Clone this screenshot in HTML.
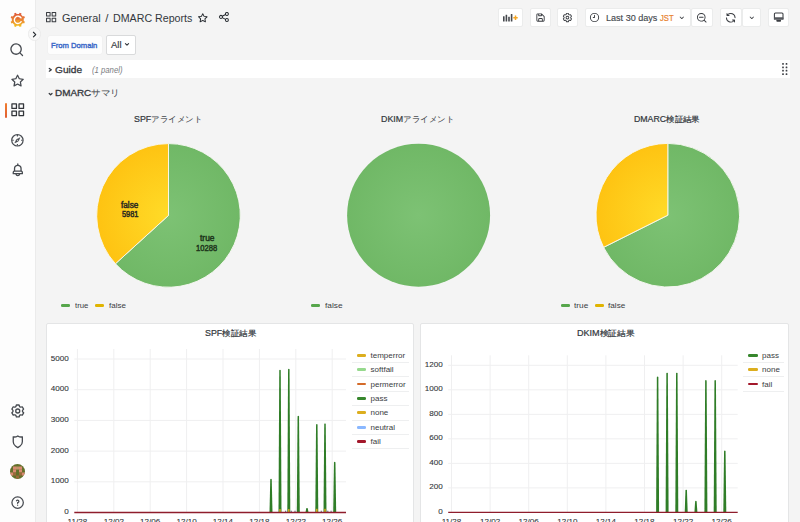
<!DOCTYPE html>
<html><head><meta charset="utf-8">
<style>
*{box-sizing:border-box;margin:0;padding:0}
html,body{width:800px;height:522px;overflow:hidden;background:#f4f4f4;font-family:"Liberation Sans",sans-serif;color:#24292e}
.abs{position:absolute}
#side{position:absolute;left:0;top:0;width:35.5px;height:522px;background:#fdfdfd;border-right:1px solid #ebebeb}
.ic{position:absolute;overflow:visible}
.btn{position:absolute;top:7.6px;height:19.7px;background:#fff;border:1px solid #ebecec;border-radius:2px}
.t{position:absolute;white-space:nowrap}
.panel{position:absolute;background:#fff;border:1px solid #e4e5e6;border-radius:2px}
</style></head><body>
<div id="side"><svg class="ic" style="left:9.8px;top:11.9px" width="15.6" height="15.6" viewBox="0 0 30 30">
<defs><linearGradient id="lg" x1="0" y1="1" x2="0" y2="0"><stop offset="0" stop-color="#f3c51f"/><stop offset=".4" stop-color="#ec8f31"/><stop offset="1" stop-color="#de553c"/></linearGradient></defs>
<path fill="url(#lg)" d="M14.70 3.40 L17.31 3.63 L18.56 1.25 L22.21 2.76 L21.40 5.33 L23.41 7.01 L22.98 6.59 L24.67 8.60 L27.24 7.79 L28.75 11.44 L26.37 12.69 L26.60 15.30 L26.60 14.70 L26.37 17.31 L28.75 18.56 L27.24 22.21 L24.67 21.40 L22.99 23.41 L23.41 22.98 L21.40 24.67 L22.21 27.24 L18.56 28.75 L17.31 26.37 L14.70 26.60 L15.30 26.60 L12.69 26.37 L11.44 28.75 L7.79 27.24 L8.60 24.67 L6.59 22.99 L7.02 23.41 L5.33 21.40 L2.76 22.21 L1.25 18.56 L3.63 17.31 L3.40 14.70 L3.40 15.30 L3.63 12.69 L1.25 11.44 L2.76 7.79 L5.33 8.60 L7.01 6.59 L6.59 7.02 L8.60 5.33 L7.79 2.76 L11.44 1.25 L12.69 3.63 L15.30 3.40Z"/>
<path d="M21.4 18.6A7 7 0 1 1 21.2 11.2" fill="none" stroke="#fff" stroke-width="2.6" stroke-linecap="round"/>
<circle cx="15" cy="15" r="3.2" fill="url(#lg)"/>
</svg><svg class="ic" style="left:9.46px;top:42.46px" width="15.48" height="15.48" viewBox="0 0 24 24"><path fill="#464a50" d="M21.71,20.29,18,16.61A9,9,0,1,0,16.61,18l3.68,3.68a1,1,0,0,0,1.42,0A1,1,0,0,0,21.71,20.29ZM11,18a7,7,0,1,1,7-7A7,7,0,0,1,11,18Z"/></svg><svg class="ic" style="left:9.94px;top:72.64px" width="15.12" height="15.12" viewBox="0 0 24 24"><path fill="#464a50" d="M22,9.67A1,1,0,0,0,21.14,9l-5.69-.83L12.9,3a1,1,0,0,0-1.8,0L8.55,8.16,2.86,9a1,1,0,0,0-.81.68,1,1,0,0,0,.25,1l4.13,4-1,5.68A1,1,0,0,0,6.9,21.44L12,18.77l5.1,2.67a.93.93,0,0,0,.46.12,1,1,0,0,0,.59-.19,1,1,0,0,0,.4-1l-1-5.68,4.13-4A1,1,0,0,0,22,9.67Zm-6.15,4a1,1,0,0,0-.29.88l.72,4.2-3.76-2a1.06,1.06,0,0,0-.94,0l-3.76,2,.72-4.2a1,1,0,0,0-.29-.88l-3-3,4.21-.61a1,1,0,0,0,.76-.55L12,5.7l1.88,3.82a1,1,0,0,0,.76.55l4.21.61Z"/></svg><div class="abs" style="left:4.8px;top:102.9px;width:2.4px;height:14.7px;background:linear-gradient(#f07d2e,#e05f33);border-radius:1px"></div><svg class="ic" style="left:9.86px;top:102.46px" width="15.48" height="15.48" viewBox="0 0 24 24"><path fill="#33363b" d="M10,13H3a1,1,0,0,0-1,1v7a1,1,0,0,0,1,1h7a1,1,0,0,0,1-1V14A1,1,0,0,0,10,13ZM9,20H4V15H9ZM21,2H14a1,1,0,0,0-1,1v7a1,1,0,0,0,1,1h7a1,1,0,0,0,1-1V3A1,1,0,0,0,21,2ZM20,9H15V4h5Zm1,4H14a1,1,0,0,0-1,1v7a1,1,0,0,0,1,1h7a1,1,0,0,0,1-1V14A1,1,0,0,0,21,13Zm-1,7H15V15h5ZM10,2H3A1,1,0,0,0,2,3v7a1,1,0,0,0,1,1h7a1,1,0,0,0,1-1V3A1,1,0,0,0,10,2ZM9,9H4V4H9Z"/></svg><svg class="ic" style="left:0;top:0" width="1" height="1" viewBox="0 0 1 1"><circle cx="17.4" cy="140.3" r="5.7" fill="none" stroke="#464a50" stroke-width="1.2"/><path d="M17.4 135.10000000000002v1.5M17.4 145.5v-1.5M12.2 140.3h1.5M22.599999999999998 140.3h-1.5" stroke="#464a50" stroke-width="1.1"/><path d="M20.00 137.70L18.30 141.20L14.80 142.90L16.50 139.40Z" fill="#464a50" stroke="#464a50" stroke-width=".5" stroke-linejoin="round"/><circle cx="17.4" cy="140.3" r=".55" fill="#fff"/></svg><svg class="ic" style="left:9.80px;top:162.20px" width="15.60" height="15.60" viewBox="0 0 24 24"><path fill="#464a50" d="M18,13.18V10a6,6,0,0,0-5-5.91V3a1,1,0,0,0-2,0V4.09A6,6,0,0,0,6,10v3.18A3,3,0,0,0,4,16v2a1,1,0,0,0,1,1H8.14a4,4,0,0,0,7.72,0H19a1,1,0,0,0,1-1V16A3,3,0,0,0,18,13.18ZM8,10a4,4,0,0,1,8,0v3H8Zm4,10a2,2,0,0,1-1.72-1h3.44A2,2,0,0,1,12,20Zm6-3H6V16a1,1,0,0,1,1-1H17a1,1,0,0,1,1,1Z"/></svg><svg class="ic" style="left:9.62px;top:403.12px" width="15.96" height="15.96" viewBox="0 0 24 24"><path fill="#464a50" d="M19.9,12.66a1,1,0,0,1,0-1.32L21.18,9.9a1,1,0,0,0,.12-1.17l-2-3.46a1,1,0,0,0-1.07-.48l-1.88.38a1,1,0,0,1-1.15-.66l-.61-1.83A1,1,0,0,0,13.64,2h-4a1,1,0,0,0-1,.68L8.08,4.51a1,1,0,0,1-1.15.66L5,4.79A1,1,0,0,0,4,5.27L2,8.73A1,1,0,0,0,2.1,9.9l1.27,1.44a1,1,0,0,1,0,1.32L2.1,14.1A1,1,0,0,0,2,15.27l2,3.46a1,1,0,0,0,1.07.48l1.88-.38a1,1,0,0,1,1.15.66l.61,1.83a1,1,0,0,0,1,.68h4a1,1,0,0,0,.95-.68l.61-1.83a1,1,0,0,1,1.15-.66l1.88.38a1,1,0,0,0,1.07-.48l2-3.46a1,1,0,0,0-.12-1.17ZM18.41,14l.8.9-1.28,2.22-1.18-.24a3,3,0,0,0-3.45,2L12.92,20H10.36L10,18.86a3,3,0,0,0-3.45-2l-1.18.24L4.07,14.89l.8-.9a3,3,0,0,0,0-4l-.8-.9L5.35,6.89l1.18.24a3,3,0,0,0,3.45-2L10.36,4h2.56l.38,1.14a3,3,0,0,0,3.45,2l1.18-.24,1.28,2.22-.8.9A3,3,0,0,0,18.41,14ZM11.64,8a4,4,0,1,0,4,4A4,4,0,0,0,11.64,8Zm0,6a2,2,0,1,1,2-2A2,2,0,0,1,11.64,14Z"/></svg><svg class="ic" style="left:9.70px;top:433.70px" width="15.60" height="15.60" viewBox="0 0 24 24"><path fill="#464a50" d="M19.63,3.65a1,1,0,0,0-.84-.2,8,8,0,0,1-6.22-1.27,1,1,0,0,0-1.14,0A8,8,0,0,1,5.21,3.45a1,1,0,0,0-.84.2A1,1,0,0,0,4,4.43v7.45a9,9,0,0,0,3.77,7.33l3.65,2.6a1,1,0,0,0,1.16,0l3.650-2.6A9,9,0,0,0,20,11.88V4.43A1,1,0,0,0,19.63,3.65ZM18,11.88a7,7,0,0,1-2.93,5.7L12,19.77,8.93,17.58A7,7,0,0,1,6,11.88V5.58a10,10,0,0,0,6-1.39,10,10,0,0,0,6,1.39Z"/></svg><svg class="ic" style="left:9.9px;top:463.9px" width="15" height="15" viewBox="0 0 15 15"><defs><clipPath id="av"><circle cx="7.5" cy="7.5" r="7.5"/></clipPath></defs><g clip-path="url(#av)"><rect width="15" height="15" fill="#62702a"/><rect x="3" y="2.5" width="3.05" height="3.05" fill="#d98a72"/><rect x="6" y="2.5" width="3.05" height="3.05" fill="#c3946a"/><rect x="9" y="2.5" width="3.05" height="3.05" fill="#d98a72"/><rect x="3" y="5.5" width="3.05" height="3.05" fill="#d98a72"/><rect x="9" y="5.5" width="3.05" height="3.05" fill="#d98a72"/><rect x="0" y="8.5" width="3.05" height="3.05" fill="#d98a72"/><rect x="3" y="8.5" width="3.05" height="3.05" fill="#9a6a3a"/><rect x="9" y="8.5" width="3.05" height="3.05" fill="#9a6a3a"/><rect x="12" y="8.5" width="3.05" height="3.05" fill="#d98a72"/><rect x="6" y="11.5" width="3.05" height="3.05" fill="#9a6a3a"/></g></svg><svg class="ic" style="left:9.68px;top:494.78px" width="15.24" height="15.24" viewBox="0 0 24 24"><path fill="#464a50" d="M11.29,15.29a1.58,1.58,0,0,0-.12.15.76.76,0,0,0-.09.18.64.64,0,0,0-.06.18,1.36,1.36,0,0,0,0,.2.84.84,0,0,0,.08.38.9.9,0,0,0,.54.54.94.94,0,0,0,.76,0,.9.9,0,0,0,.54-.54A1,1,0,0,0,13,16a1,1,0,0,0-.29-.71A1,1,0,0,0,11.29,15.29ZM12,2A10,10,0,1,0,22,12,10,10,0,0,0,12,2Zm0,18a8,8,0,1,1,8-8A8,8,0,0,1,12,20ZM12,7A3,3,0,0,0,9.4,8.5a1,1,0,1,0,1.73,1A1,1,0,0,1,12,9a1,1,0,0,1,0,2,1,1,0,0,0-1,1v1a1,1,0,0,0,2,0v-.18A3,3,0,0,0,12,7Z"/></svg></div><div class="abs" style="left:27.6px;top:27.2px;width:13.6px;height:13.6px;border-radius:50%;background:#f8f8f8;border:1px solid #ebebeb"></div><svg class="ic" style="left:28.40px;top:27.90px" width="13.20" height="13.20" viewBox="0 0 24 24"><path fill="#24292e" d="M14.83,11.29,10.59,7.05a1,1,0,0,0-1.42,0,1,1,0,0,0,0,1.41L12.71,12,9.17,15.54a1,1,0,0,0,0,1.41,1,1,0,0,0,.71.29,1,1,0,0,0,.71-.29l4.24-4.24A1,1,0,0,0,14.83,11.29Z"/></svg><svg class="ic" style="left:45.13px;top:11.38px" width="12.24" height="12.24" viewBox="0 0 24 24"><path fill="#3a3d42" d="M10,13H3a1,1,0,0,0-1,1v7a1,1,0,0,0,1,1h7a1,1,0,0,0,1-1V14A1,1,0,0,0,10,13ZM9,20H4V15H9ZM21,2H14a1,1,0,0,0-1,1v7a1,1,0,0,0,1,1h7a1,1,0,0,0,1-1V3A1,1,0,0,0,21,2ZM20,9H15V4h5Zm1,4H14a1,1,0,0,0-1,1v7a1,1,0,0,0,1,1h7a1,1,0,0,0,1-1V14A1,1,0,0,0,21,13Zm-1,7H15V15h5ZM10,2H3A1,1,0,0,0,2,3v7a1,1,0,0,0,1,1h7a1,1,0,0,0,1-1V3A1,1,0,0,0,10,2ZM9,9H4V4H9Z"/></svg><div class="t" style="left:61.97px;top:12.81px;font-size:11.4px;line-height:11.4px;color:#33373c;transform:scaleX(0.9553);transform-origin:0 0">General</div><div class="t" style="left:105.32px;top:12.81px;font-size:11.4px;line-height:11.4px;color:#33373c">/</div><div class="t" style="left:113.07px;top:12.81px;font-size:11.4px;line-height:11.4px;color:#33373c;transform:scaleX(0.9358);transform-origin:0 0">DMARC Reports</div><svg class="ic" style="left:197.24px;top:11.69px" width="11.52" height="11.52" viewBox="0 0 24 24"><path fill="#24292e" d="M22,9.67A1,1,0,0,0,21.14,9l-5.69-.83L12.9,3a1,1,0,0,0-1.8,0L8.55,8.16,2.86,9a1,1,0,0,0-.81.68,1,1,0,0,0,.25,1l4.13,4-1,5.68A1,1,0,0,0,6.9,21.44L12,18.77l5.1,2.67a.93.93,0,0,0,.46.12,1,1,0,0,0,.59-.19,1,1,0,0,0,.4-1l-1-5.68,4.13-4A1,1,0,0,0,22,9.67Zm-6.15,4a1,1,0,0,0-.29.88l.72,4.2-3.76-2a1.06,1.06,0,0,0-.94,0l-3.76,2,.72-4.2a1,1,0,0,0-.29-.88l-3-3,4.21-.61a1,1,0,0,0,.76-.55L12,5.7l1.88,3.82a1,1,0,0,0,.76.55l4.21.61Z"/></svg><svg class="ic" style="left:218.26px;top:11.36px" width="11.88" height="11.88" viewBox="0 0 24 24"><path fill="#24292e" d="M18,14a4,4,0,0,0-3.08,1.48l-5.1-2.35a3.64,3.64,0,0,0,0-2.26l5.1-2.35A4,4,0,1,0,14,6a4.17,4.17,0,0,0,.07.71L8.79,9.14a4,4,0,1,0,0,5.72l5.28,2.43A4.17,4.17,0,0,0,14,18a4,4,0,1,0,4-4ZM18,4a2,2,0,1,1-2,2A2,2,0,0,1,18,4ZM6,14a2,2,0,1,1,2-2A2,2,0,0,1,6,14Zm12,6a2,2,0,1,1,2-2A2,2,0,0,1,18,20Z"/></svg><div class="btn" style="left:498px;width:25px"></div><svg class="ic" style="left:503px;top:14px" width="16" height="7.5" viewBox="0 0 16 7.5"><g fill="#45484d"><rect x="0" y="2.2" width="1.6" height="5.3" rx=".3"/><rect x="2.6" y=".8" width="1.6" height="6.7" rx=".3"/><rect x="5.2" y="2.8" width="1.6" height="4.7" rx=".3"/><rect x="7.8" y="0" width="1.6" height="7.5" rx=".3"/></g><path d="M12.5 1.6v4.4M10.3 3.8h4.4" stroke="#f5a623" stroke-width="1.5"/></svg><div class="btn" style="left:530px;width:20.5px"></div><svg class="ic" style="left:534.58px;top:11.93px" width="11.04" height="11.04" viewBox="0 0 24 24"><path fill="#3a3d42" d="M20.71,9.29l-6-6a1,1,0,0,0-.32-.21A1.09,1.09,0,0,0,14,3H6A3,3,0,0,0,3,6V18a3,3,0,0,0,3,3H18a3,3,0,0,0,3-3V10A1,1,0,0,0,20.71,9.29ZM9,5h4V7H9Zm6,14H9V16a1,1,0,0,1,1-1h4a1,1,0,0,1,1,1Zm4-1a1,1,0,0,1-1,1H17V16a3,3,0,0,0-3-3H10a3,3,0,0,0-3,3v3H6a1,1,0,0,1-1-1V6A1,1,0,0,1,6,5H7V8A1,1,0,0,0,8,9h6a1,1,0,0,0,1-1V6.41l4,4Z"/></svg><div class="btn" style="left:557px;width:21.2px"></div><svg class="ic" style="left:562.02px;top:11.72px" width="11.16" height="11.16" viewBox="0 0 24 24"><path fill="#3a3d42" d="M19.9,12.66a1,1,0,0,1,0-1.32L21.18,9.9a1,1,0,0,0,.12-1.17l-2-3.46a1,1,0,0,0-1.07-.48l-1.88.38a1,1,0,0,1-1.15-.66l-.61-1.83A1,1,0,0,0,13.64,2h-4a1,1,0,0,0-1,.68L8.08,4.51a1,1,0,0,1-1.15.66L5,4.79A1,1,0,0,0,4,5.27L2,8.73A1,1,0,0,0,2.1,9.9l1.27,1.44a1,1,0,0,1,0,1.32L2.1,14.1A1,1,0,0,0,2,15.27l2,3.46a1,1,0,0,0,1.07.48l1.88-.38a1,1,0,0,1,1.15.66l.61,1.83a1,1,0,0,0,1,.68h4a1,1,0,0,0,.95-.68l.61-1.83a1,1,0,0,1,1.15-.66l1.88.38a1,1,0,0,0,1.07-.48l2-3.46a1,1,0,0,0-.12-1.17ZM18.41,14l.8.9-1.28,2.22-1.18-.24a3,3,0,0,0-3.45,2L12.92,20H10.36L10,18.86a3,3,0,0,0-3.45-2l-1.18.24L4.07,14.89l.8-.9a3,3,0,0,0,0-4l-.8-.9L5.35,6.89l1.18.24a3,3,0,0,0,3.45-2L10.36,4h2.56l.38,1.14a3,3,0,0,0,3.45,2l1.18-.24,1.28,2.22-.8.9A3,3,0,0,0,18.41,14ZM11.64,8a4,4,0,1,0,4,4A4,4,0,0,0,11.64,8Zm0,6a2,2,0,1,1,2-2A2,2,0,0,1,11.64,14Z"/></svg><div class="btn" style="left:584.7px;width:106px"></div><svg class="ic" style="left:589.28px;top:11.98px" width="11.04" height="11.04" viewBox="0 0 24 24"><path fill="#3a3d42" d="M12,2A10,10,0,1,0,22,12,10,10,0,0,0,12,2Zm0,18a8,8,0,1,1,8-8A8,8,0,0,1,12,20Zm0-14a1,1,0,0,0-1,1v4H9a1,1,0,0,0,0,2h3a1,1,0,0,0,1-1V7A1,1,0,0,0,12,6Z"/></svg><div class="t" style="left:605.71px;top:12.98px;font-size:9.9px;line-height:9.9px;color:#45494e;-webkit-text-stroke-width:0.15px;transform:scaleX(0.9176);transform-origin:0 0">Last 30 days</div><div class="t" style="left:659.89px;top:13.98px;font-size:8.5px;line-height:8.5px;color:#e8832f;-webkit-text-stroke-width:0.2px;transform:scaleX(0.9005);transform-origin:0 0">JST</div><svg class="ic" style="left:676.90px;top:12.70px" width="9.60" height="9.60" viewBox="0 0 24 24"><path fill="#3a3d42" d="M17,9.17a1,1,0,0,0-1.41,0L12,12.71,8.46,9.17a1,1,0,0,0-1.41,0,1,1,0,0,0,0,1.42l4.24,4.24a1,1,0,0,0,1.42,0L17,10.59A1,1,0,0,0,17,9.17Z"/></svg><div class="btn" style="left:691px;width:22px"></div><svg class="ic" style="left:696.24px;top:11.54px" width="11.52" height="11.52" viewBox="0 0 24 24"><path fill="#3a3d42" d="M21.71,20.29,18,16.61A9,9,0,1,0,16.61,18l3.68,3.68a1,1,0,0,0,1.42,0A1,1,0,0,0,21.71,20.29ZM11,18a7,7,0,1,1,7-7A7,7,0,0,1,11,18Zm4-8H7a1,1,0,0,0,0,2h8a1,1,0,0,0,0-2Z"/></svg><div class="btn" style="left:720px;width:21.8px"></div><svg class="ic" style="left:725.04px;top:11.54px" width="11.52" height="11.52" viewBox="0 0 24 24"><path fill="#3a3d42" d="M19.91,15.51H15.38a1,1,0,0,0,0,2h2.4A8,8,0,0,1,4,12a1,1,0,0,0-2,0,10,10,0,0,0,16.88,7.23V21a1,1,0,0,0,2,0V16.5A1,1,0,0,0,19.91,15.51ZM12,2A10,10,0,0,0,5.12,4.77V3a1,1,0,0,0-2,0V7.5a1,1,0,0,0,1,1h4.5a1,1,0,0,0,0-2H6.22A8,8,0,0,1,20,12a1,1,0,0,0,2,0A10,10,0,0,0,12,2Z"/></svg><div class="btn" style="left:741.8px;width:19.6px"></div><svg class="ic" style="left:746.80px;top:12.70px" width="9.60" height="9.60" viewBox="0 0 24 24"><path fill="#3a3d42" d="M17,9.17a1,1,0,0,0-1.41,0L12,12.71,8.46,9.17a1,1,0,0,0-1.41,0,1,1,0,0,0,0,1.42l4.24,4.24a1,1,0,0,0,1.42,0L17,10.59A1,1,0,0,0,17,9.17Z"/></svg><div class="btn" style="left:768px;width:21.2px"></div><svg class="ic" style="left:0;top:0" width="1" height="1" viewBox="0 0 1 1"><path d="M774.4 19.4V14a1 1 0 0 1 1-1h6.6a1 1 0 0 1 1 1v5.4" fill="none" stroke="#3a3d42" stroke-width="1.05"/><rect x="774" y="17.2" width="9.4" height="2.6" rx=".7" fill="#55585d"/><path d="M776.2 19.8h5l-.5 1.9h-4z" fill="#3a3d42"/></svg><div class="abs" style="left:47.5px;top:36.2px;width:54px;height:17.8px;background:#fdfdfd;border-radius:2px;box-shadow:0 0 0 0.5px #eeeeee"></div><div class="t" style="left:51.42px;top:41.60px;font-size:8.0px;line-height:8.0px;color:#3a68c8;-webkit-text-stroke-width:0.4px;transform:scaleX(0.9568);transform-origin:0 0">From Domain</div><div class="abs" style="left:106.2px;top:35.3px;width:30.2px;height:19.3px;background:#fff;border:1px solid #d9dadb;border-radius:2px"></div><div class="t" style="left:110.98px;top:40.91px;font-size:8.7px;line-height:8.7px;color:#34383d;-webkit-text-stroke-width:0.15px;transform:scaleX(1.0919);transform-origin:0 0">All</div><svg class="ic" style="left:0;top:0" width="1" height="1" viewBox="0 0 1 1"><path d="M125.4 43.6L127 45.2 128.6 43.6" fill="none" stroke="#34383d" stroke-width="1.1" stroke-linecap="round" stroke-linejoin="round"/></svg><div class="abs" style="left:46px;top:60px;width:744px;height:18.2px;background:#fff"></div><svg class="ic" style="left:0;top:0" width="1" height="1" viewBox="0 0 1 1"><path d="M49.3 68.4L51.3 69.8 49.3 71.2" fill="none" stroke="#34383d" stroke-width="1.25" stroke-linecap="round" stroke-linejoin="round"/></svg><div class="t" style="left:55.22px;top:65.04px;font-size:9.6px;line-height:9.6px;color:#36393e;-webkit-text-stroke-width:0.3px;transform:scaleX(1.0563);transform-origin:0 0">Guide</div><div class="t" style="left:91.61px;top:67.03px;font-size:8.2px;line-height:8.2px;color:#7a7d82;font-style:italic;transform:scaleX(0.9430);transform-origin:0 0">(1 panel)</div><svg class="ic" style="left:0;top:0" width="1" height="1" viewBox="0 0 1 1"><rect x="782.15" y="63.05" width="1.7" height="1.7" rx=".5" fill="#3f4247"/><rect x="782.15" y="66.45" width="1.7" height="1.7" rx=".5" fill="#3f4247"/><rect x="782.15" y="69.85" width="1.7" height="1.7" rx=".5" fill="#3f4247"/><rect x="782.15" y="73.25" width="1.7" height="1.7" rx=".5" fill="#3f4247"/><rect x="785.65" y="63.05" width="1.7" height="1.7" rx=".5" fill="#3f4247"/><rect x="785.65" y="66.45" width="1.7" height="1.7" rx=".5" fill="#3f4247"/><rect x="785.65" y="69.85" width="1.7" height="1.7" rx=".5" fill="#3f4247"/><rect x="785.65" y="73.25" width="1.7" height="1.7" rx=".5" fill="#3f4247"/></svg><svg class="ic" style="left:0;top:0" width="1" height="1" viewBox="0 0 1 1"><path d="M49.2 93.5L50.6 94.8 52 93.5" fill="none" stroke="#34383d" stroke-width="1.25" stroke-linecap="round" stroke-linejoin="round"/></svg><div class="t" style="left:55.24px;top:88.31px;font-size:9.4px;line-height:9.4px;color:#36393e;-webkit-text-stroke-width:0.3px;transform:scaleX(1.0546);transform-origin:0 0">DMARC<span style="-webkit-text-stroke-width:0.05px;color:#4a4d52">サマリ</span></div><svg class="ic" style="left:0;top:0" width="800" height="522" viewBox="0 0 800 522"><defs><radialGradient id="g1" gradientUnits="userSpaceOnUse" cx="168.5" cy="215.4" r="71.8"><stop offset="0" stop-color="#7dc274"/><stop offset="1" stop-color="#70b866"/></radialGradient><radialGradient id="y1" gradientUnits="userSpaceOnUse" cx="168.5" cy="215.4" r="71.8"><stop offset="0" stop-color="#ffdb28"/><stop offset="1" stop-color="#fec312"/></radialGradient><radialGradient id="g2" gradientUnits="userSpaceOnUse" cx="418.6" cy="215.2" r="71.5"><stop offset="0" stop-color="#7dc274"/><stop offset="1" stop-color="#70b866"/></radialGradient><radialGradient id="y2" gradientUnits="userSpaceOnUse" cx="418.6" cy="215.2" r="71.5"><stop offset="0" stop-color="#ffdb28"/><stop offset="1" stop-color="#fec312"/></radialGradient><radialGradient id="g3" gradientUnits="userSpaceOnUse" cx="667.8" cy="215.2" r="71.8"><stop offset="0" stop-color="#7dc274"/><stop offset="1" stop-color="#70b866"/></radialGradient><radialGradient id="y3" gradientUnits="userSpaceOnUse" cx="667.8" cy="215.2" r="71.8"><stop offset="0" stop-color="#ffdb28"/><stop offset="1" stop-color="#fec312"/></radialGradient></defs><path d="M168.50 215.40L168.50 143.60A71.8 71.8 0 1 1 115.43 263.77Z" fill="url(#g1)" stroke="#f8f8f4" stroke-width="0.9" stroke-linejoin="round"/><path d="M168.50 215.40L115.43 263.77A71.8 71.8 0 0 1 168.50 143.60Z" fill="url(#y1)" stroke="#f8f8f4" stroke-width="0.9" stroke-linejoin="round"/><circle cx="418.6" cy="215.2" r="71.5" fill="url(#g2)"/><path d="M667.80 215.20L667.80 143.40A71.8 71.8 0 1 1 603.60 247.35Z" fill="url(#g3)" stroke="#f8f8f4" stroke-width="0.9" stroke-linejoin="round"/><path d="M667.80 215.20L603.60 247.35A71.8 71.8 0 0 1 667.80 143.40Z" fill="url(#y3)" stroke="#f8f8f4" stroke-width="0.9" stroke-linejoin="round"/></svg><div class="t" style="left:133.70px;top:114.84px;font-size:8.3px;line-height:8.3px;color:#33373c;-webkit-text-stroke-width:0.2px;transform:scaleX(1.0648);transform-origin:0 0">SPF<span style="-webkit-text-stroke-width:0.05px;color:#45484d">アライメント</span></div><div class="t" style="left:381.00px;top:114.64px;font-size:8.3px;line-height:8.3px;color:#33373c;-webkit-text-stroke-width:0.2px;transform:scaleX(1.0654);transform-origin:0 0">DKIM<span style="-webkit-text-stroke-width:0.05px;color:#45484d">アライメント</span></div><div class="t" style="left:634.40px;top:115.04px;font-size:8.3px;line-height:8.3px;color:#33373c;-webkit-text-stroke-width:0.2px;transform:scaleX(1.0557);transform-origin:0 0">DMARC検証結果</div><div class="t" style="left:121.30px;top:200.66px;font-size:8.4px;line-height:8.4px;color:#2b2a20;-webkit-text-stroke-width:0.45px;transform:scaleX(0.9777);transform-origin:0 0">false</div><div class="t" style="left:121.80px;top:210.26px;font-size:8.4px;line-height:8.4px;color:#2b2a20;-webkit-text-stroke-width:0.45px;transform:scaleX(0.8856);transform-origin:0 0">5981</div><div class="t" style="left:199.70px;top:234.26px;font-size:8.4px;line-height:8.4px;color:#1e361b;-webkit-text-stroke-width:0.45px;transform:scaleX(1.0049);transform-origin:0 0">true</div><div class="t" style="left:196.30px;top:244.06px;font-size:8.4px;line-height:8.4px;color:#1e361b;-webkit-text-stroke-width:0.45px;transform:scaleX(0.9060);transform-origin:0 0">10288</div><div class="abs" style="left:60.8px;top:304.15px;width:9.20px;height:2.7px;border-radius:1.35px;background:#56a64b"></div><div class="t" style="left:75.02px;top:301.60px;font-size:8px;line-height:8px;color:#3a3d42;transform:scaleX(0.9756);transform-origin:0 0">true</div><div class="abs" style="left:95px;top:304.15px;width:9.00px;height:2.7px;border-radius:1.35px;background:#e0b400"></div><div class="t" style="left:108.52px;top:301.60px;font-size:8px;line-height:8px;color:#3a3d42;transform:scaleX(1.0032);transform-origin:0 0">false</div><div class="abs" style="left:310.9px;top:304.15px;width:9.10px;height:2.7px;border-radius:1.35px;background:#56a64b"></div><div class="t" style="left:324.82px;top:301.60px;font-size:8px;line-height:8px;color:#3a3d42;transform:scaleX(1.0387);transform-origin:0 0">false</div><div class="abs" style="left:560.5px;top:304.15px;width:9.00px;height:2.7px;border-radius:1.35px;background:#56a64b"></div><div class="t" style="left:574.02px;top:301.60px;font-size:8px;line-height:8px;color:#3a3d42;transform:scaleX(1.0336);transform-origin:0 0">true</div><div class="abs" style="left:594.5px;top:304.15px;width:9.00px;height:2.7px;border-radius:1.35px;background:#e0b400"></div><div class="t" style="left:608.02px;top:301.60px;font-size:8px;line-height:8px;color:#3a3d42;transform:scaleX(1.0209);transform-origin:0 0">false</div><div class="panel" style="left:46px;top:322.5px;width:368px;height:220px"></div><div class="t" style="left:204.80px;top:329.26px;font-size:8.4px;line-height:8.4px;color:#33373c;-webkit-text-stroke-width:0.2px;transform:scaleX(1.0582);transform-origin:0 0">SPF検証結果</div><svg class="ic" style="left:0;top:0" width="800" height="522" viewBox="0 0 800 522"><line x1="74.3" x2="346" y1="481.80" y2="481.80" stroke="#efeff0" stroke-width="1"/><line x1="74.3" x2="346" y1="451.10" y2="451.10" stroke="#efeff0" stroke-width="1"/><line x1="74.3" x2="346" y1="420.40" y2="420.40" stroke="#efeff0" stroke-width="1"/><line x1="74.3" x2="346" y1="389.70" y2="389.70" stroke="#efeff0" stroke-width="1"/><line x1="74.3" x2="346" y1="359.00" y2="359.00" stroke="#efeff0" stroke-width="1"/><line x1="77.40" x2="77.40" y1="349" y2="512.5" stroke="#efeff0" stroke-width="1"/><line x1="113.80" x2="113.80" y1="349" y2="512.5" stroke="#efeff0" stroke-width="1"/><line x1="150.20" x2="150.20" y1="349" y2="512.5" stroke="#efeff0" stroke-width="1"/><line x1="186.60" x2="186.60" y1="349" y2="512.5" stroke="#efeff0" stroke-width="1"/><line x1="223.00" x2="223.00" y1="349" y2="512.5" stroke="#efeff0" stroke-width="1"/><line x1="259.40" x2="259.40" y1="349" y2="512.5" stroke="#efeff0" stroke-width="1"/><line x1="295.80" x2="295.80" y1="349" y2="512.5" stroke="#efeff0" stroke-width="1"/><line x1="332.20" x2="332.20" y1="349" y2="512.5" stroke="#efeff0" stroke-width="1"/><path d="M269.50 512.5L270.25 479.13L271.00 478.73L271.75 479.13L272.50 512.5Z" fill="#2f7d27"/><path d="M278.50 512.5L279.25 370.14L280.00 369.75L280.75 370.14L281.50 512.5Z" fill="#2f7d27"/><path d="M287.30 512.5L288.05 369.22L288.80 368.82L289.55 369.22L290.30 512.5Z" fill="#2f7d27"/><path d="M296.80 512.5L297.55 416.19L298.30 415.80L299.05 416.19L299.80 512.5Z" fill="#2f7d27"/><path d="M305.50 512.5L306.25 508.29L307.00 507.89L307.75 508.29L308.50 512.5Z" fill="#2f7d27"/><path d="M315.30 512.5L316.05 424.48L316.80 424.08L317.55 424.48L318.30 512.5Z" fill="#2f7d27"/><path d="M323.50 512.5L324.25 423.87L325.00 423.47L325.75 423.87L326.50 512.5Z" fill="#2f7d27"/><path d="M333.20 512.5L333.95 462.25L334.70 461.85L335.45 462.25L336.20 512.5Z" fill="#2f7d27"/><rect x="279.2" y="509.12" width="1.6" height="3.38" fill="#d9a81a"/><rect x="288.0" y="509.12" width="1.6" height="3.38" fill="#d9a81a"/><rect x="316.0" y="508.82" width="1.6" height="3.68" fill="#d9a81a"/><rect x="324.2" y="508.82" width="1.6" height="3.68" fill="#d9a81a"/><rect x="285.0" y="510.7" width="1.2" height="1.8" fill="#6f7f8f"/><rect x="290.7" y="510.7" width="1.2" height="1.8" fill="#6f7f8f"/><rect x="294.4" y="510.7" width="1.2" height="1.8" fill="#6f7f8f"/><rect x="320.7" y="510.7" width="1.2" height="1.8" fill="#6f7f8f"/><rect x="327.2" y="510.7" width="1.2" height="1.8" fill="#6f7f8f"/><rect x="330.5" y="510.7" width="1.2" height="1.8" fill="#6f7f8f"/><line x1="74.3" x2="346" y1="512.5" y2="512.5" stroke="#8f1d2c" stroke-width="1.3"/></svg><div class="t" style="left:64.17px;top:508.01px;font-size:8.1px;line-height:8.1px;color:#33363b;-webkit-text-stroke-width:0.1px">0</div><div class="t" style="left:50.67px;top:477.32px;font-size:8.1px;line-height:8.1px;color:#33363b;-webkit-text-stroke-width:0.1px">1000</div><div class="t" style="left:50.67px;top:446.62px;font-size:8.1px;line-height:8.1px;color:#33363b;-webkit-text-stroke-width:0.1px">2000</div><div class="t" style="left:50.67px;top:415.92px;font-size:8.1px;line-height:8.1px;color:#33363b;-webkit-text-stroke-width:0.1px">3000</div><div class="t" style="left:50.67px;top:385.22px;font-size:8.1px;line-height:8.1px;color:#33363b;-webkit-text-stroke-width:0.1px">4000</div><div class="t" style="left:50.67px;top:354.52px;font-size:8.1px;line-height:8.1px;color:#33363b;-webkit-text-stroke-width:0.1px">5000</div><div class="t" style="left:67.57px;top:518.01px;font-size:8.1px;line-height:8.1px;color:#33363b;-webkit-text-stroke-width:0.1px">11/28</div><div class="t" style="left:103.67px;top:518.01px;font-size:8.1px;line-height:8.1px;color:#33363b;-webkit-text-stroke-width:0.1px">12/02</div><div class="t" style="left:140.07px;top:518.01px;font-size:8.1px;line-height:8.1px;color:#33363b;-webkit-text-stroke-width:0.1px">12/06</div><div class="t" style="left:176.47px;top:518.01px;font-size:8.1px;line-height:8.1px;color:#33363b;-webkit-text-stroke-width:0.1px">12/10</div><div class="t" style="left:212.87px;top:518.01px;font-size:8.1px;line-height:8.1px;color:#33363b;-webkit-text-stroke-width:0.1px">12/14</div><div class="t" style="left:249.27px;top:518.01px;font-size:8.1px;line-height:8.1px;color:#33363b;-webkit-text-stroke-width:0.1px">12/18</div><div class="t" style="left:285.67px;top:518.01px;font-size:8.1px;line-height:8.1px;color:#33363b;-webkit-text-stroke-width:0.1px">12/22</div><div class="t" style="left:322.07px;top:518.01px;font-size:8.1px;line-height:8.1px;color:#33363b;-webkit-text-stroke-width:0.1px">12/26</div><div class="abs" style="left:356.8px;top:353.85px;width:9.20px;height:2.7px;border-radius:1.35px;background:#dcae1e"></div><div class="t" style="left:370.52px;top:351.70px;font-size:8px;line-height:8px;color:#3a3d42">temperror</div><div class="abs" style="left:351.8px;top:362.00px;width:57.5px;height:1px;background:#eeeff0"></div><div class="abs" style="left:356.8px;top:368.25px;width:9.20px;height:2.7px;border-radius:1.35px;background:#96d98d"></div><div class="t" style="left:370.52px;top:366.10px;font-size:8px;line-height:8px;color:#3a3d42">softfail</div><div class="abs" style="left:351.8px;top:376.40px;width:57.5px;height:1px;background:#eeeff0"></div><div class="abs" style="left:356.8px;top:382.65px;width:9.20px;height:2.7px;border-radius:1.35px;background:#d46b2a"></div><div class="t" style="left:370.52px;top:380.50px;font-size:8px;line-height:8px;color:#3a3d42">permerror</div><div class="abs" style="left:351.8px;top:390.80px;width:57.5px;height:1px;background:#eeeff0"></div><div class="abs" style="left:356.8px;top:397.05px;width:9.20px;height:2.7px;border-radius:1.35px;background:#37872d"></div><div class="t" style="left:370.52px;top:394.90px;font-size:8px;line-height:8px;color:#3a3d42">pass</div><div class="abs" style="left:351.8px;top:405.20px;width:57.5px;height:1px;background:#eeeff0"></div><div class="abs" style="left:356.8px;top:411.45px;width:9.20px;height:2.7px;border-radius:1.35px;background:#dcae1e"></div><div class="t" style="left:370.52px;top:409.30px;font-size:8px;line-height:8px;color:#3a3d42">none</div><div class="abs" style="left:351.8px;top:419.60px;width:57.5px;height:1px;background:#eeeff0"></div><div class="abs" style="left:356.8px;top:425.85px;width:9.20px;height:2.7px;border-radius:1.35px;background:#8ab8ff"></div><div class="t" style="left:370.52px;top:423.70px;font-size:8px;line-height:8px;color:#3a3d42">neutral</div><div class="abs" style="left:351.8px;top:434.00px;width:57.5px;height:1px;background:#eeeff0"></div><div class="abs" style="left:356.8px;top:440.25px;width:9.20px;height:2.7px;border-radius:1.35px;background:#a3182b"></div><div class="t" style="left:370.52px;top:438.10px;font-size:8px;line-height:8px;color:#3a3d42">fail</div><div class="abs" style="left:351.8px;top:448.40px;width:57.5px;height:1px;background:#eeeff0"></div><div class="panel" style="left:420.3px;top:322.5px;width:369px;height:220px"></div><div class="t" style="left:577.20px;top:329.26px;font-size:8.4px;line-height:8.4px;color:#33373c;-webkit-text-stroke-width:0.2px;transform:scaleX(1.0826);transform-origin:0 0">DKIM検証結果</div><svg class="ic" style="left:0;top:0" width="800" height="522" viewBox="0 0 800 522"><line x1="448.2" x2="737.7" y1="487.88" y2="487.88" stroke="#efeff0" stroke-width="1"/><line x1="448.2" x2="737.7" y1="463.37" y2="463.37" stroke="#efeff0" stroke-width="1"/><line x1="448.2" x2="737.7" y1="438.85" y2="438.85" stroke="#efeff0" stroke-width="1"/><line x1="448.2" x2="737.7" y1="414.33" y2="414.33" stroke="#efeff0" stroke-width="1"/><line x1="448.2" x2="737.7" y1="389.82" y2="389.82" stroke="#efeff0" stroke-width="1"/><line x1="448.2" x2="737.7" y1="365.30" y2="365.30" stroke="#efeff0" stroke-width="1"/><line x1="451.50" x2="451.50" y1="355.3" y2="512.4" stroke="#efeff0" stroke-width="1"/><line x1="490.10" x2="490.10" y1="355.3" y2="512.4" stroke="#efeff0" stroke-width="1"/><line x1="528.70" x2="528.70" y1="355.3" y2="512.4" stroke="#efeff0" stroke-width="1"/><line x1="567.30" x2="567.30" y1="355.3" y2="512.4" stroke="#efeff0" stroke-width="1"/><line x1="605.90" x2="605.90" y1="355.3" y2="512.4" stroke="#efeff0" stroke-width="1"/><line x1="644.50" x2="644.50" y1="355.3" y2="512.4" stroke="#efeff0" stroke-width="1"/><line x1="683.10" x2="683.10" y1="355.3" y2="512.4" stroke="#efeff0" stroke-width="1"/><line x1="721.70" x2="721.70" y1="355.3" y2="512.4" stroke="#efeff0" stroke-width="1"/><path d="M656.10 512.4L656.85 376.98L657.60 376.58L658.35 376.98L659.10 512.4Z" fill="#2f7d27"/><path d="M665.60 512.4L666.35 373.05L667.10 372.65L667.85 373.05L668.60 512.4Z" fill="#2f7d27"/><path d="M675.30 512.4L676.05 373.05L676.80 372.65L677.55 373.05L678.30 512.4Z" fill="#2f7d27"/><path d="M684.70 512.4L685.45 490.12L686.20 489.72L686.95 490.12L687.70 512.4Z" fill="#2f7d27"/><path d="M694.40 512.4L695.15 501.15L695.90 500.75L696.65 501.15L697.40 512.4Z" fill="#2f7d27"/><path d="M704.40 512.4L705.15 380.41L705.90 380.01L706.65 380.41L707.40 512.4Z" fill="#2f7d27"/><path d="M713.70 512.4L714.45 380.41L715.20 380.01L715.95 380.41L716.70 512.4Z" fill="#2f7d27"/><path d="M723.30 512.4L724.05 450.90L724.80 450.50L725.55 450.90L726.30 512.4Z" fill="#2f7d27"/><line x1="448.2" x2="737.7" y1="512.4" y2="512.4" stroke="#8f1d2c" stroke-width="1.3"/></svg><div class="t" style="left:438.37px;top:507.91px;font-size:8.1px;line-height:8.1px;color:#33363b;-webkit-text-stroke-width:0.1px">0</div><div class="t" style="left:429.37px;top:483.40px;font-size:8.1px;line-height:8.1px;color:#33363b;-webkit-text-stroke-width:0.1px">200</div><div class="t" style="left:429.37px;top:458.88px;font-size:8.1px;line-height:8.1px;color:#33363b;-webkit-text-stroke-width:0.1px">400</div><div class="t" style="left:429.37px;top:434.37px;font-size:8.1px;line-height:8.1px;color:#33363b;-webkit-text-stroke-width:0.1px">600</div><div class="t" style="left:429.37px;top:409.85px;font-size:8.1px;line-height:8.1px;color:#33363b;-webkit-text-stroke-width:0.1px">800</div><div class="t" style="left:424.87px;top:385.33px;font-size:8.1px;line-height:8.1px;color:#33363b;-webkit-text-stroke-width:0.1px">1000</div><div class="t" style="left:424.87px;top:360.82px;font-size:8.1px;line-height:8.1px;color:#33363b;-webkit-text-stroke-width:0.1px">1200</div><div class="t" style="left:441.67px;top:517.91px;font-size:8.1px;line-height:8.1px;color:#33363b;-webkit-text-stroke-width:0.1px">11/28</div><div class="t" style="left:479.97px;top:517.91px;font-size:8.1px;line-height:8.1px;color:#33363b;-webkit-text-stroke-width:0.1px">12/02</div><div class="t" style="left:518.57px;top:517.91px;font-size:8.1px;line-height:8.1px;color:#33363b;-webkit-text-stroke-width:0.1px">12/06</div><div class="t" style="left:557.17px;top:517.91px;font-size:8.1px;line-height:8.1px;color:#33363b;-webkit-text-stroke-width:0.1px">12/10</div><div class="t" style="left:595.77px;top:517.91px;font-size:8.1px;line-height:8.1px;color:#33363b;-webkit-text-stroke-width:0.1px">12/14</div><div class="t" style="left:634.37px;top:517.91px;font-size:8.1px;line-height:8.1px;color:#33363b;-webkit-text-stroke-width:0.1px">12/18</div><div class="t" style="left:672.97px;top:517.91px;font-size:8.1px;line-height:8.1px;color:#33363b;-webkit-text-stroke-width:0.1px">12/22</div><div class="t" style="left:711.57px;top:517.91px;font-size:8.1px;line-height:8.1px;color:#33363b;-webkit-text-stroke-width:0.1px">12/26</div><div class="abs" style="left:748.4px;top:353.85px;width:9.20px;height:2.7px;border-radius:1.35px;background:#37872d"></div><div class="t" style="left:762.12px;top:351.70px;font-size:8px;line-height:8px;color:#3a3d42">pass</div><div class="abs" style="left:743.4px;top:362.00px;width:40.5px;height:1px;background:#eeeff0"></div><div class="abs" style="left:748.4px;top:368.25px;width:9.20px;height:2.7px;border-radius:1.35px;background:#dcae1e"></div><div class="t" style="left:762.12px;top:366.10px;font-size:8px;line-height:8px;color:#3a3d42">none</div><div class="abs" style="left:743.4px;top:376.40px;width:40.5px;height:1px;background:#eeeff0"></div><div class="abs" style="left:748.4px;top:382.65px;width:9.20px;height:2.7px;border-radius:1.35px;background:#a3182b"></div><div class="t" style="left:762.12px;top:380.50px;font-size:8px;line-height:8px;color:#3a3d42">fail</div><div class="abs" style="left:743.4px;top:390.80px;width:40.5px;height:1px;background:#eeeff0"></div>
</body></html>
